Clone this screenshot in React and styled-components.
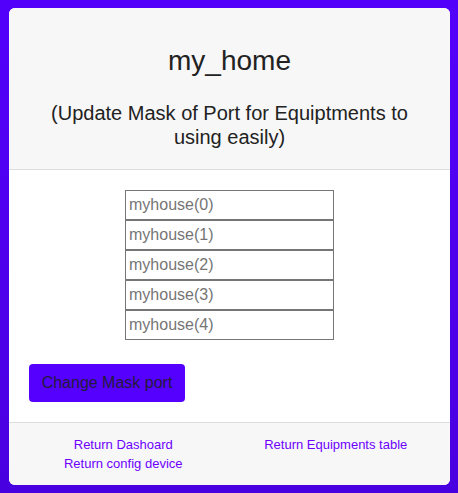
import styled, { createGlobalStyle } from "styled-components";

const GlobalStyle = createGlobalStyle`
  html, body {
    margin: 0;
    padding: 0;
  }
  body {
    font-family: "Liberation Sans", Arial, sans-serif;
    background: linear-gradient(to bottom, #5300fb, #4900e0);
    min-height: 493px;
  }
`;

const Page = styled.div`
  padding: 8px 8px 8px 9px;
  box-sizing: border-box;
  min-height: 493px;
`;

const Card = styled.div`
  background-color: #fff;
  border-radius: 6px;
  overflow: hidden;
  display: flex;
  flex-direction: column;
  height: 477px;
`;

const Header = styled.div`
  background-color: #f7f7f7;
  border-bottom: 1px solid #dcdcdc;
  text-align: center;
  color: #222;
  padding: 37px 24px 20px;
  height: 162px;
  box-sizing: border-box;
`;

const Title = styled.h1`
  margin: 0;
  font-size: 28px;
  font-weight: 400;
  line-height: 32px;
`;

const Subtitle = styled.h2`
  margin: 24px 0 0;
  font-size: 20px;
  font-weight: 400;
  line-height: 24px;
`;

const Body = styled.div`
  flex: 1;
  padding: 20px 20px 20px;
  display: flex;
  flex-direction: column;
`;

const Inputs = styled.div`
  display: flex;
  flex-direction: column;
  align-items: center;
`;

const MaskInput = styled.input`
  width: 209px;
  height: 30px;
  box-sizing: border-box;
  border: 1px solid #767676;
  border-radius: 0;
  padding: 0 3px;
  font-family: "Liberation Sans", Arial, sans-serif;
  font-size: 16px;
  color: #333;
  &::placeholder {
    color: #757575;
  }
`;

const SubmitButton = styled.button`
  align-self: flex-start;
  margin: 24px 0 0 0;
  background-color: #5500ff;
  color: #241b3a;
  border: none;
  border-radius: 4px;
  padding: 0 12px;
  height: 38px;
  width: 156px;
  font-family: "Liberation Sans", Arial, sans-serif;
  font-size: 16px;
`;

const Footer = styled.div`
  background-color: #f7f7f7;
  border-top: 1px solid #dcdcdc;
  display: grid;
  grid-template-columns: 1fr 1fr;
  padding: 12px 8px 12px;
`;

const LinkColumn = styled.div`
  display: flex;
  flex-direction: column;
  align-items: center;
`;

const FooterLink = styled.a`
  color: #6e00ff;
  font-size: 13px;
  line-height: 19px;
  text-decoration: none;
`;

const ports = [0, 1, 2, 3, 4];

export default function App() {
  return (
    <>
      <GlobalStyle />
      <Page>
        <Card>
          <Header>
            <Title>my_home</Title>
            <Subtitle>
              (Update Mask of Port for Equiptments to using easily)
            </Subtitle>
          </Header>
          <Body>
            <Inputs>
              {ports.map((p) => (
                <MaskInput key={p} placeholder={`myhouse(${p})`} />
              ))}
            </Inputs>
            <SubmitButton>Change Mask port</SubmitButton>
          </Body>
          <Footer>
            <LinkColumn>
              <FooterLink href="#">Return Dashoard</FooterLink>
              <FooterLink href="#">Return config device</FooterLink>
            </LinkColumn>
            <LinkColumn>
              <FooterLink href="#">Return Equipments table</FooterLink>
            </LinkColumn>
          </Footer>
        </Card>
      </Page>
    </>
  );
}
